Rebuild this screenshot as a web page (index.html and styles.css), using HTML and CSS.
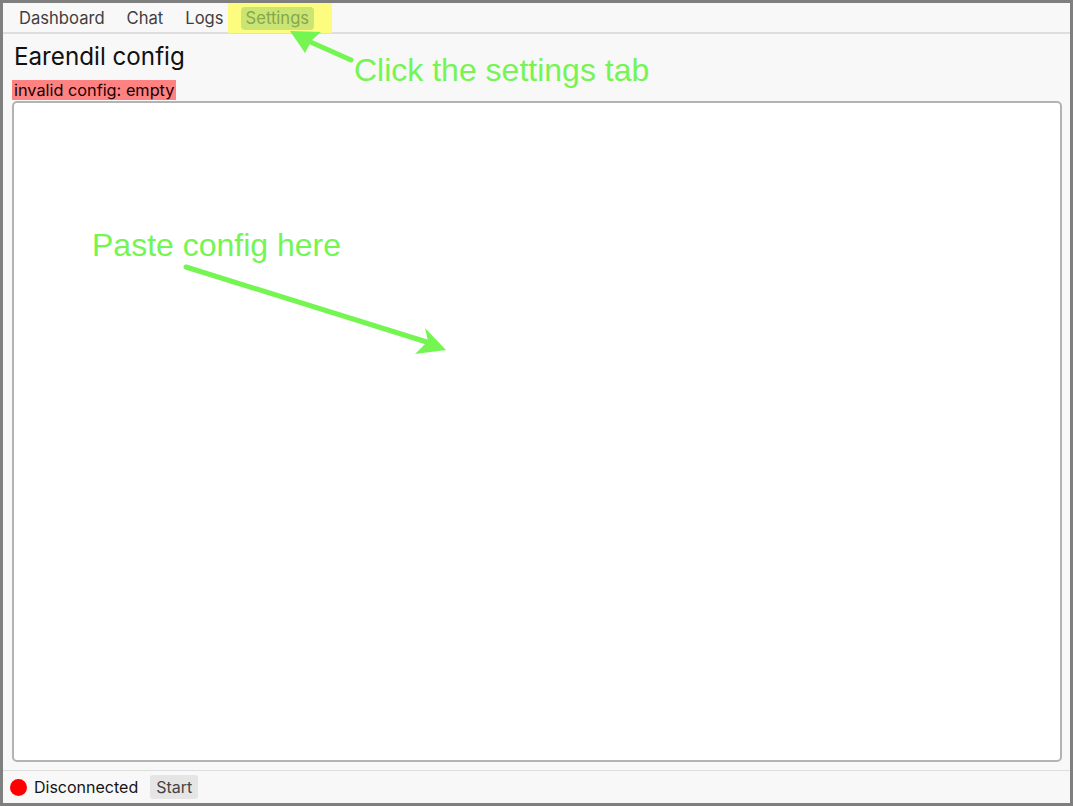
FILE: index.html
```html
<!DOCTYPE html>
<html>
<head>
<meta charset="utf-8">
<link rel="stylesheet" href="styles.css">
</head>
<body>
<div class="frame">
  <div class="topbar">
    <div class="highlight"></div>
    <nav class="tabs">
      <span class="tab">Dashboard</span>
      <span class="tab">Chat</span>
      <span class="tab">Logs</span>
      <span class="tab active">Settings</span>
    </nav>
  </div>
  <main class="main">
    <h1 class="title">Earendil config</h1>
    <div class="error"><span>invalid config: empty</span></div>
    <textarea class="config"></textarea>
  </main>
  <footer class="status">
    <span class="dot"></span>
    <span class="label">Disconnected</span>
    <span class="btn">Start</span>
  </footer>
  <div class="note note-tab">Click the settings tab</div>
  <div class="note note-paste">Paste config here</div>
  <svg class="arrows" width="1073" height="806" viewBox="0 0 1073 806">
    <line x1="351" y1="60" x2="306" y2="40" stroke="#74f552" stroke-width="5" stroke-linecap="round"/>
    <polygon points="290,31 321,32 312,40 305,53" fill="#74f552"/>
    <line x1="186" y1="267" x2="430" y2="343" stroke="#74f552" stroke-width="5" stroke-linecap="round"/>
    <polygon points="446,350 425,328 428,341 415,354" fill="#74f552"/>
  </svg>
</div>
</body>
</html>
```
FILE: styles.css
```css
* { box-sizing: border-box; }
html, body { margin: 0; padding: 0; }
body {
  width: 1073px;
  height: 806px;
  font-family: Inter, "Noto Sans", sans-serif;
  background: #808080;
}
.frame {
  position: relative;
  width: 1073px;
  height: 806px;
  border: 3px solid #7f7f7f;
  background: #f8f8f8;
  display: flex;
  flex-direction: column;
}
.topbar {
  position: relative;
  height: 31px;
  border-bottom: 2px solid #dedede;
  flex: none;
}
.highlight {
  position: absolute;
  left: 225px;
  top: 0;
  width: 104px;
  height: 30px;
  background: #fcfc7e;
}
.tabs {
  position: relative;
  z-index: 1;
  display: flex;
  gap: 12px;
  padding: 4px 0 0 11px;
}
.tab {
  font-size: 16.6px;
  line-height: 23px;
  padding: 0 5px;
  color: #3f3f3f;
  border-radius: 4px;
}
.tab.active {
  background: #cbe574;
  color: #86a84a;
}
.main {
  flex: 1;
  display: flex;
  flex-direction: column;
  padding: 10px 9px 8px 9px;
  min-height: 0;
}
.title {
  margin: 0;
  font-size: 24.2px;
  font-weight: 400;
  line-height: 26px;
  color: #111;
  padding-left: 2px;
}
.error {
  margin-top: 10px;
  height: 20px;
  display: flex;
}
.error span {
  background: #ff8282;
  color: #1a0000;
  font-size: 16.3px;
  line-height: 20px;
  padding: 0 2px;
}
.config {
  margin-top: 1px;
  flex: 1;
  width: 1050px;
  resize: none;
  background: #fff;
  border: 2px solid #b3b3b3;
  border-radius: 5px;
  outline: none;
}
.status {
  flex: none;
  height: 33px;
  border-top: 1px solid #dedede;
  display: flex;
  align-items: center;
  padding: 0 0 0 7px;
  font-size: 16px;
  color: #151515;
}
.dot {
  width: 17px;
  height: 17px;
  border-radius: 50%;
  background: #ff0000;
  margin-right: 7px;
}
.label { margin-right: 12px; }
.btn {
  background: #e5e5e5;
  color: #444;
  line-height: 24px;
  padding: 0 6px;
  border-radius: 3px;
}
.note {
  position: absolute;
  font-family: "Liberation Sans", Arial, sans-serif;
  font-size: 32px;
  line-height: 36px;
  color: #74f552;
  white-space: nowrap;
}
.note-tab { left: 351px; top: 49px; }
.note-paste { left: 89px; top: 224px; }
.arrows {
  position: absolute;
  left: -3px;
  top: -3px;
  pointer-events: none;
}
```
